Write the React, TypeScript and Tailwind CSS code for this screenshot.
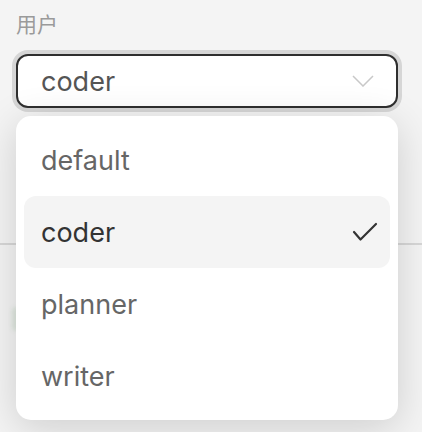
import React from "react";

const options = ["default", "coder", "planner", "writer"];

export default function App() {
  const selected = "coder";

  return (
    <div className="relative min-h-[432px] w-[422px] overflow-hidden bg-[#f4f4f4] font-['Inter','Noto_Sans_CJK_SC',sans-serif]">
      <div className="pl-4 pr-6 pt-[8px]">
        <p className="font-['Noto_Sans_CJK_SC',sans-serif] text-[21px] leading-[30px] text-[#9a9a9a]">用户</p>

        {/* select trigger */}
        <div className="-mx-1 mt-[12px] rounded-[16px] bg-[#d6d6d6] p-1">
          <div className="flex h-[54px] items-center justify-between rounded-[12px] border-2 border-[#2f2f2f] bg-white pl-[23px] pr-[22px]">
            <span className="text-[27px] leading-none text-[#555]">{selected}</span>
            <svg width="22" height="12" viewBox="0 0 22 12" fill="none" className="text-[#c8c8c8]">
              <path d="M1 1l10 10L21 1" stroke="currentColor" strokeWidth="1.5" />
            </svg>
          </div>
        </div>
      </div>

      {/* content underneath the menu */}
      <div className="mt-[131px] h-[2px] bg-[#d7d7d7]" />
      <div className="ml-3 mt-[62px] h-6 w-2 rounded-full bg-[#dde6dd] blur-[2px]" />

      {/* menu */}
      <div className="absolute left-4 top-[116px] w-[382px] rounded-[15px] bg-white p-2 shadow-[0_8px_40px_rgba(0,0,0,0.16)]">
        {options.map((o) => {
          const active = o === selected;
          return (
            <div
              key={o}
              className={`flex h-[72px] items-center justify-between rounded-[12px] pl-[17px] pr-[12px] ${
                active ? "bg-[#f4f4f4] text-[#333]" : "text-[#666]"
              }`}
            >
              <span className="text-[27px] leading-none">{o}</span>
              {active && (
                <svg width="26" height="20" viewBox="0 0 26 20" fill="none">
                  <path d="M2 10l6.5 7.5L24 2" stroke="#333" strokeWidth="2.2" strokeLinecap="round" strokeLinejoin="round" />
                </svg>
              )}
            </div>
          );
        })}
      </div>
    </div>
  );
}
